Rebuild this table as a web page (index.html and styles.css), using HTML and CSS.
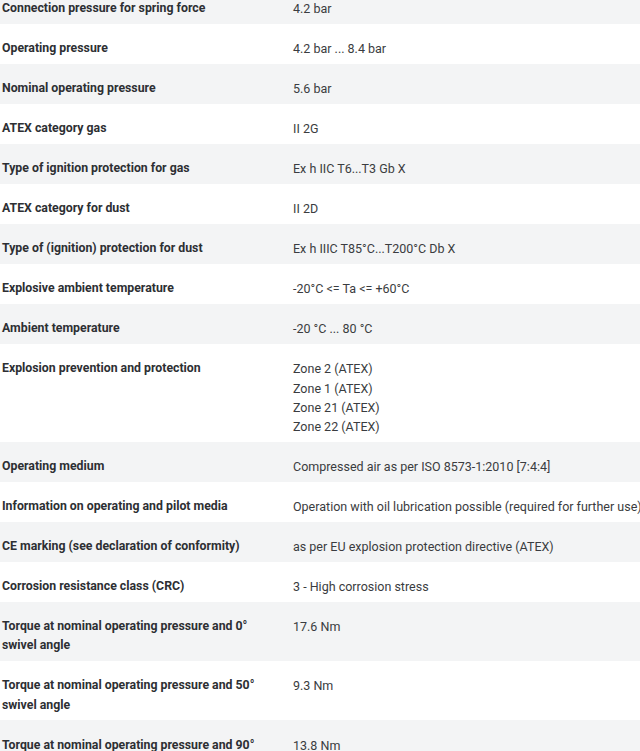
FILE: index.html
```html
<!DOCTYPE html>
<html lang="en">
<head>
<meta charset="utf-8">
<title>Technical data</title>
<link rel="stylesheet" href="styles.css">
</head>
<body>
<div class="specs">
  <div class="row"><div class="label">Connection pressure for spring force</div><div class="value">4.2 bar</div></div>
  <div class="row"><div class="label">Operating pressure</div><div class="value">4.2 bar ... 8.4 bar</div></div>
  <div class="row"><div class="label">Nominal operating pressure</div><div class="value">5.6 bar</div></div>
  <div class="row"><div class="label">ATEX category gas</div><div class="value">II 2G</div></div>
  <div class="row"><div class="label">Type of ignition protection for gas</div><div class="value">Ex h IIC T6...T3 Gb X</div></div>
  <div class="row"><div class="label">ATEX category for dust</div><div class="value">II 2D</div></div>
  <div class="row"><div class="label">Type of (ignition) protection for dust</div><div class="value">Ex h IIIC T85°C...T200°C Db X</div></div>
  <div class="row"><div class="label">Explosive ambient temperature</div><div class="value">-20°C &lt;= Ta &lt;= +60°C</div></div>
  <div class="row"><div class="label">Ambient temperature</div><div class="value">-20 °C ... 80 °C</div></div>
  <div class="row"><div class="label">Explosion prevention and protection</div><div class="value">Zone 2 (ATEX)<br>Zone 1 (ATEX)<br>Zone 21 (ATEX)<br>Zone 22 (ATEX)</div></div>
  <div class="row"><div class="label">Operating medium</div><div class="value">Compressed air as per ISO 8573-1:2010 [7:4:4]</div></div>
  <div class="row"><div class="label">Information on operating and pilot media</div><div class="value">Operation with oil lubrication possible (required for further use)</div></div>
  <div class="row"><div class="label">CE marking (see declaration of conformity)</div><div class="value">as per EU explosion protection directive (ATEX)</div></div>
  <div class="row"><div class="label">Corrosion resistance class (CRC)</div><div class="value">3 - High corrosion stress</div></div>
  <div class="row"><div class="label">Torque at nominal operating pressure and 0° swivel angle</div><div class="value">17.6 Nm</div></div>
  <div class="row"><div class="label">Torque at nominal operating pressure and 50° swivel angle</div><div class="value">9.3 Nm</div></div>
  <div class="row"><div class="label">Torque at nominal operating pressure and 90° swivel angle</div><div class="value">13.8 Nm</div></div>
</div>
</body>
</html>
```

FILE: styles.css
```css
html, body {
  margin: 0;
  padding: 0;
  background: #fff;
  overflow: hidden;
}
body {
  width: 640px;
  height: 751px;
  font-family: Roboto, "Liberation Sans", sans-serif;
  color: #333;
}
.specs {
  margin-top: -16px;
  width: 760px;
}
.row {
  display: grid;
  grid-template-columns: 293px 1fr;
  padding: 15.4px 0 5.3px;
  line-height: 19.3px;
}
.row:nth-child(odd) {
  background: #f3f4f5;
}
.label {
  padding-left: 2px;
  padding-right: 34px;
  font-weight: bold;
  font-size: 12.3px;
  color: #2d2f33;
}
.value {
  font-size: 12.5px;
  white-space: nowrap;
  color: #3a3c40;
}
```
